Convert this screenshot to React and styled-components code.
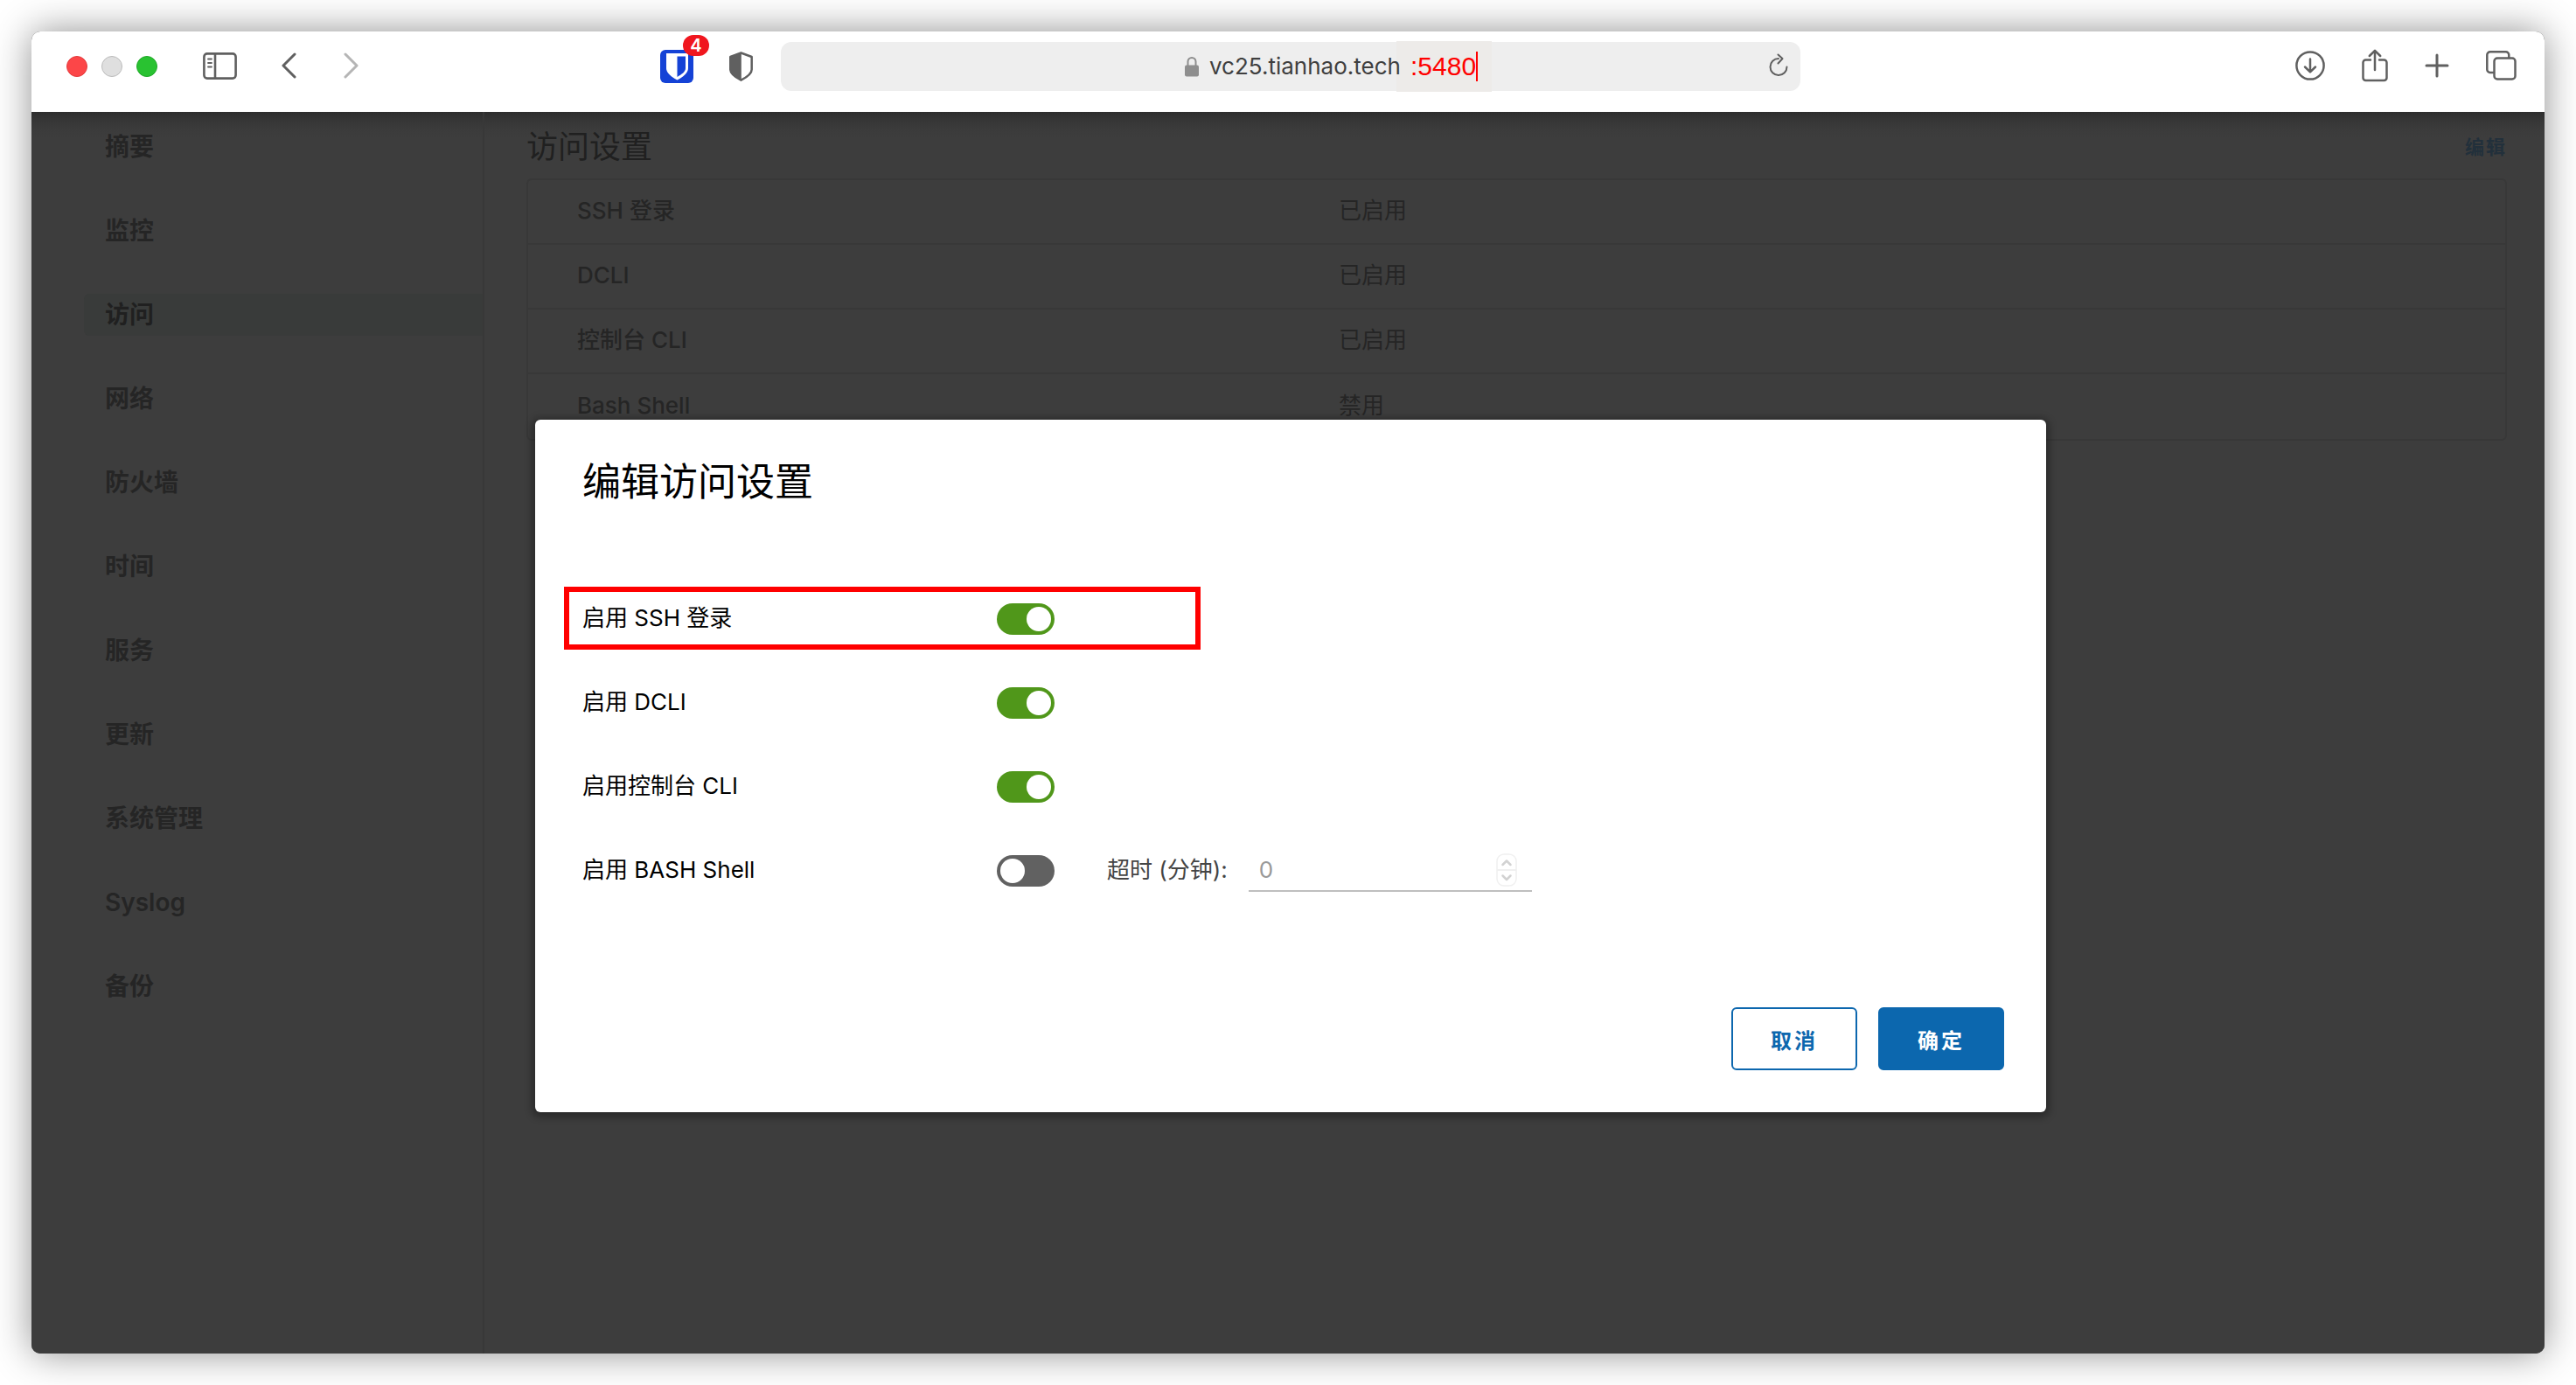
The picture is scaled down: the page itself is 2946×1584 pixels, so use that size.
import React, { useState } from "react";
import styled, { createGlobalStyle, css } from "styled-components";

const sans = `Inter, "Noto Sans CJK SC", "Liberation Sans", sans-serif`;

const color = {
  chrome: "#ffffff",
  chromeIcon: "#606060",
  page: "#3d3d3d",
  line: "#383838",
  text: "#252525",
  heading: "#202020",
  active: "#393b3a",
  link: "#22303b",
  primary: "#0c67ae",
  on: "#50971a",
  off: "#616161",
  mark: "#ff0000",
};

const GlobalStyle = createGlobalStyle`
  *, *::before, *::after { box-sizing: border-box; }
  body { margin: 0; background: #fff; font-family: ${sans}; }
  button, input { font-family: inherit; margin: 0; }
`;

const Desktop = styled.div`
  display: flex;
  min-height: 100vh;
  padding: 36px;
`;

const Window = styled.div`
  flex: 1;
  min-width: 0;
  display: flex;
  flex-direction: column;
  border-radius: 10px;
  overflow: hidden;
  background: ${color.page};
  box-shadow: 0 0 44px rgba(0, 0, 0, 0.44);
`;

/* ---------- Browser chrome ---------- */

const Toolbar = styled.header`
  display: grid;
  grid-template-columns: minmax(0, 857fr) minmax(0, 1166fr) minmax(0, 851fr);
  align-items: center;
  height: 92px;
  padding-bottom: 12px;
  background: ${color.chrome};
`;

const ToolbarSide = styled.div`
  display: flex;
  align-items: center;
  justify-content: ${(p) => (p.$end ? "flex-end" : "flex-start")};
  gap: ${(p) => p.$gap || 0}px;
  padding: ${(p) => (p.$end ? "0 32px 2px 0" : "0 32px 0 40px")};
`;

const Lights = styled.div`
  display: flex;
  gap: 16px;
  margin-right: 52px;
`;

const Light = styled.button`
  width: 24px;
  height: 24px;
  padding: 0;
  border-radius: 50%;
  border: 1px solid ${(p) => p.$edge};
  background: ${(p) => p.$fill};
`;

const IconButton = styled.button`
  display: flex;
  flex: none;
  padding: 0;
  border: 0;
  background: none;
  color: ${(p) => (p.$muted ? "#b5b5b5" : color.chromeIcon)};
  svg { display: block; }
`;

const NavButtons = styled.div`
  display: flex;
  gap: 54px;
  margin-left: 51px;
`;

const Extensions = styled.div`
  display: flex;
  align-items: center;
  gap: 41px;
  margin-left: auto;
`;

const BadgeHost = styled.span`
  position: relative;
  display: block;
`;

const Badge = styled.span`
  position: absolute;
  top: -17px;
  left: 26px;
  width: 30px;
  height: 24px;
  border-radius: 12px;
  background: #f0161e;
  color: #fff;
  font-size: 20px;
  font-weight: 600;
  line-height: 24px;
  text-align: center;
`;

const AddressBar = styled.div`
  display: grid;
  grid-template-columns: 1fr auto 1fr;
  align-items: center;
  height: 56px;
  padding: 0 14px;
  border-radius: 12px;
  background: #eeeeee;
`;

const Address = styled.label`
  position: relative;
  grid-column: 2;
  display: flex;
  align-items: center;
  gap: 12px;
  padding-left: 6px;
`;

const UrlInput = styled.input`
  position: relative;
  z-index: 1;
  width: 220px;
  height: 40px;
  padding: 0 0 2px;
  border: 0;
  outline: 0;
  background: none;
  color: #3f3f3f;
  font-size: 26px;
`;

const Port = styled.span`
  position: absolute;
  top: -9px;
  left: calc(100% - 6px);
  display: flex;
  align-items: center;
  height: 58px;
  padding: 0 16px;
  background: #edebe9;
  color: ${color.mark};
  font-family: "Liberation Sans", sans-serif;
  font-size: 30px;
  line-height: 56px;
  white-space: nowrap;
  &::after {
    content: "";
    width: 2px;
    height: 34px;
    background: ${color.mark};
  }
`;

const ReloadSlot = styled.div`
  justify-self: end;
`;

/* ---------- Page ---------- */

const Page = styled.div`
  position: relative;
  flex: 1;
  display: grid;
  grid-template-columns: 518px minmax(0, 1fr);
  background: linear-gradient(#2d2d2d, #363636 10px, #3b3b3b 20px, ${color.page} 30px);
`;

const Sidebar = styled.nav`
  display: flex;
  flex-direction: column;
  gap: 48px;
  padding: 16px 0 0 60px;
  border-right: 2px solid ${color.line};
`;

const NavLink = styled.a`
  padding-left: 24px;
  border-radius: 6px 0 0 6px;
  color: ${color.text};
  font-size: 28px;
  font-weight: 600;
  line-height: 48px;
  text-decoration: none;
  ${(p) => p.$active && css`
    background: ${color.active};
    color: ${color.heading};
  `}
`;

const Main = styled.main`
  padding: 12px 43px 0 48px;
`;

const SectionHeader = styled.div`
  display: flex;
  align-items: center;
  justify-content: space-between;
  height: 56px;
  margin-bottom: 8px;
`;

const SectionTitle = styled.h1`
  margin: 0;
  color: ${color.heading};
  font-size: 36px;
  font-weight: 400;
  line-height: 56px;
`;

const EditButton = styled.button`
  padding: 0;
  border: 0;
  background: none;
  color: ${color.link};
  font-size: 22px;
  font-weight: 700;
  letter-spacing: 2px;
  line-height: 48px;
`;

const SettingsTable = styled.table`
  width: 100%;
  border: 2px solid ${color.line};
  border-radius: 6px;
  border-spacing: 0;
  color: ${color.text};
  font-size: 26px;
  line-height: 36px;
  text-align: left;
  table-layout: fixed;
  th, td {
    height: 74px;
    padding: 0 0 2px;
    border-bottom: 2px solid ${color.line};
  }
  tr:last-child th, tr:last-child td { border-bottom: 0; }
  th {
    width: 41%;
    padding-left: 56px;
    font-weight: 500;
  }
`;

/* ---------- Dialog ---------- */

const Backdrop = styled.div`
  position: absolute;
  inset: 0;
  display: flex;
  align-items: center;
  justify-content: center;
  padding: 76px 0 0 6px;
`;

const Dialog = styled.form`
  width: 1728px;
  max-width: 100%;
  padding: 40px 48px 48px 54px;
  border-radius: 6px;
  background: #fff;
  color: #000;
  box-shadow: 0 2px 8px 4px rgba(0, 0, 0, 0.3);
  font-size: 26px;
`;

const DialogTitle = styled.h2`
  margin: 0 0 90px;
  font-size: 44px;
  font-weight: 400;
  line-height: 62px;
`;

const Rows = styled.div`
  display: flex;
  flex-direction: column;
  gap: 24px;
`;

const Row = styled.div`
  position: relative;
  display: flex;
  align-items: center;
  height: 72px;
  ${(p) => p.$marked && css`
    &::after {
      content: "";
      position: absolute;
      top: -1px;
      bottom: 1px;
      left: -21px;
      width: 728px;
      border: 6px solid ${color.mark};
      pointer-events: none;
    }
  `}
`;

const RowLabel = styled.label`
  width: 474px;
  padding-bottom: 2px;
  line-height: 36px;
`;

const Switch = styled.input`
  appearance: none;
  flex: none;
  display: flex;
  justify-content: ${(p) => (p.checked ? "flex-end" : "flex-start")};
  width: 66px;
  height: 36px;
  padding: 4px;
  border-radius: 18px;
  background: ${(p) => (p.checked ? color.on : color.off)};
  &::before {
    content: "";
    width: 28px;
    height: 28px;
    border-radius: 50%;
    background: #fff;
  }
`;

const TimeoutLabel = styled.label`
  margin: 0 24px 0 60px;
  padding-bottom: 2px;
  color: #454545;
  line-height: 36px;
`;

const NumberField = styled.div`
  display: flex;
  align-items: center;
  width: 324px;
  height: 48px;
  padding: 0 17px 0 12px;
  border-bottom: 2px solid #bfbfbf;
`;

const NumberInput = styled.input`
  flex: 1;
  min-width: 0;
  height: 46px;
  padding: 0 0 2px;
  border: 0;
  background: none;
  color: #999;
  font-size: 26px;
  appearance: textfield;
  &::-webkit-inner-spin-button { appearance: none; }
`;

const Actions = styled.div`
  display: flex;
  justify-content: flex-end;
  gap: 24px;
  margin-top: 120px;
`;

const ActionButton = styled.button`
  width: 144px;
  height: 72px;
  padding: 0;
  border: 2px solid ${color.primary};
  border-radius: 6px;
  background: ${(p) => (p.$primary ? color.primary : "#fff")};
  color: ${(p) => (p.$primary ? "#fff" : color.primary)};
  font-size: 24px;
  font-weight: 700;
  letter-spacing: 3px;
`;

/* ---------- Icons ---------- */

const Icon = ({ w, h, sw = 3, children }) => (
  <svg width={w} height={h} viewBox={`0 0 ${w} ${h}`} fill="none" stroke="currentColor"
    strokeWidth={sw} strokeLinecap="round" strokeLinejoin="round" aria-hidden="true">
    {children}
  </svg>
);

const SidebarIcon = () => (
  <Icon w={39} h={32} sw={2.6}>
    <rect x="1.4" y="1.4" width="36.2" height="28.2" rx="3.5" />
    <path d="M14 1.5v28" />
    <path d="M6 7.5h4M6 12h4M6 16.5h4" strokeWidth="1.8" />
  </Icon>
);
const BackIcon = () => <Icon w={17} h={32}><path d="M15 2 2 15l13 13" /></Icon>;
const ForwardIcon = () => <Icon w={17} h={32}><path d="m2 2 13 13L2 28" /></Icon>;

const VaultIcon = () => (
  <svg width="38" height="38" viewBox="0 0 38 38" aria-hidden="true">
    <rect width="38" height="38" rx="6" fill="#1542d6" />
    <path d="M7 4h25v17c0 5.5-6 10-12.5 13.5C13 31 7 26.5 7 21z" fill="#fff" />
    <path d="M19.5 7.5H29V21c0 4-4.5 7-9.5 10z" fill="#1542d6" />
  </svg>
);
const ShieldIcon = () => (
  <svg width="27" height="34" viewBox="0 0 27 34" aria-hidden="true">
    <path d="M13.5 1.5 25.7 6v14.5c0 4.5-6 9-12.2 12.2C7.3 29.5 1.3 25 1.3 20.5V6z"
      fill="none" stroke="currentColor" strokeWidth="2.5" strokeLinejoin="round" />
    <path d="M13.8 1v32C7 29.5.5 25 .5 20.5V6z" fill="currentColor" />
  </svg>
);
const LockIcon = () => (
  <svg width="16" height="24" viewBox="0 0 16 24" aria-hidden="true">
    <path d="M3.5 11V6.5a4.5 4.5 0 0 1 9 0V11" fill="none" stroke="#8e8e8e" strokeWidth="2" />
    <rect y="10.5" width="16" height="13" rx="2" fill="#8e8e8e" />
  </svg>
);
const ReloadIcon = () => (
  <Icon w={22} h={30} sw={2}>
    <path d="M11 6a9.5 9.5 0 1 0 9.5 9.5" />
    <path d="m10.5 1.5 5 4.5-5 5.5" />
  </Icon>
);
const DownloadIcon = () => (
  <Icon w={34} h={34} sw={2.5}>
    <circle cx="17" cy="17" r="15.6" />
    <path d="M17 9.5v14.5M11 18.5l6 5.8 6-5.8" />
  </Icon>
);
const ShareIcon = () => (
  <Icon w={30} h={40} sw={2.5}>
    <path d="M10 13.5H4.5a3 3 0 0 0-3 3V34a3 3 0 0 0 3 3h21a3 3 0 0 0 3-3V16.5a3 3 0 0 0-3-3H20" />
    <path d="M15 25V3M8.8 9 15 2.8 21.2 9" />
  </Icon>
);
const PlusIcon = () => <Icon w={28} h={28}><path d="M14 2v24M2 14h24" /></Icon>;
const TabsIcon = () => (
  <Icon w={35} h={34} sw={2.5}>
    <rect x="9.5" y="8.5" width="24" height="24" rx="3.5" />
    <path d="M9 25H4.8a3.5 3.5 0 0 1-3.5-3.5V4.8a3.5 3.5 0 0 1 3.5-3.5h18a3.5 3.5 0 0 1 3.5 3.5V8" />
  </Icon>
);
const StepperIcon = () => (
  <svg width="24" height="38" viewBox="0 0 24 38" fill="none" aria-hidden="true">
    <rect x="1" y="1" width="22" height="36" rx="8" stroke="#f0f0f0" strokeWidth="1.5" />
    <path d="M1 19h22" stroke="#f0f0f0" strokeWidth="2" />
    <path d="m7.5 13 4.5-4.5 4.5 4.5M7.5 25.5 12 30l4.5-4.5" stroke="#d2d2d2"
      strokeWidth="2.5" strokeLinecap="round" strokeLinejoin="round" />
  </svg>
);

/* ---------- Data ---------- */

const navItems = ["摘要", "监控", "访问", "网络", "防火墙", "时间", "服务", "更新", "系统管理", "Syslog", "备份"];

const settings = [
  ["SSH 登录", "已启用"],
  ["DCLI", "已启用"],
  ["控制台 CLI", "已启用"],
  ["Bash Shell", "禁用"],
];

const options = [
  { id: "ssh", label: "启用 SSH 登录", marked: true },
  { id: "dcli", label: "启用 DCLI" },
  { id: "console", label: "启用控制台 CLI" },
  { id: "bash", label: "启用 BASH Shell" },
];

function BrowserToolbar() {
  return (
    <Toolbar>
      <ToolbarSide>
        <Lights>
          <Light $fill="#fc4648" $edge="#e33b3d" aria-label="关闭" />
          <Light $fill="#dfdfdf" $edge="#bcbcbc" aria-label="最小化" />
          <Light $fill="#29c231" $edge="#1fa827" aria-label="缩放" />
        </Lights>
        <IconButton aria-label="边栏"><SidebarIcon /></IconButton>
        <NavButtons>
          <IconButton aria-label="后退"><BackIcon /></IconButton>
          <IconButton $muted aria-label="前进"><ForwardIcon /></IconButton>
        </NavButtons>
        <Extensions>
          <BadgeHost>
            <IconButton aria-label="密码库"><VaultIcon /></IconButton>
            <Badge>4</Badge>
          </BadgeHost>
          <IconButton aria-label="隐私报告"><ShieldIcon /></IconButton>
        </Extensions>
      </ToolbarSide>
      <AddressBar>
        <Address>
          <LockIcon />
          <UrlInput aria-label="地址" defaultValue="vc25.tianhao.tech" />
          <Port>:5480</Port>
        </Address>
        <ReloadSlot>
          <IconButton aria-label="重新载入"><ReloadIcon /></IconButton>
        </ReloadSlot>
      </AddressBar>
      <ToolbarSide $end $gap={42}>
        <IconButton aria-label="下载"><DownloadIcon /></IconButton>
        <IconButton aria-label="共享"><ShareIcon /></IconButton>
        <IconButton aria-label="新标签页"><PlusIcon /></IconButton>
        <IconButton aria-label="标签页概览"><TabsIcon /></IconButton>
      </ToolbarSide>
    </Toolbar>
  );
}

function AccessDialog() {
  const [enabled, setEnabled] = useState({ ssh: true, dcli: true, console: true, bash: false });
  const toggle = (id) => setEnabled((prev) => ({ ...prev, [id]: !prev[id] }));
  return (
    <Dialog role="dialog" aria-labelledby="dialog-title" onSubmit={(e) => e.preventDefault()}>
      <DialogTitle id="dialog-title">编辑访问设置</DialogTitle>
      <Rows>
        {options.map(({ id, label, marked }) => (
          <Row key={id} $marked={marked}>
            <RowLabel htmlFor={id}>{label}</RowLabel>
            <Switch type="checkbox" role="switch" id={id} checked={enabled[id]} onChange={() => toggle(id)} />
            {id === "bash" && (
              <>
                <TimeoutLabel htmlFor="timeout">超时 (分钟):</TimeoutLabel>
                <NumberField>
                  <NumberInput type="number" id="timeout" defaultValue="0" disabled={!enabled.bash} />
                  <StepperIcon />
                </NumberField>
              </>
            )}
          </Row>
        ))}
      </Rows>
      <Actions>
        <ActionButton type="button">取消</ActionButton>
        <ActionButton type="submit" $primary>确定</ActionButton>
      </Actions>
    </Dialog>
  );
}

export default function App() {
  return (
    <>
      <GlobalStyle />
      <Desktop>
        <Window>
          <BrowserToolbar />
          <Page>
            <Sidebar>
              {navItems.map((item) => (
                <NavLink key={item} href="#" $active={item === "访问"}>{item}</NavLink>
              ))}
            </Sidebar>
            <Main>
              <SectionHeader>
                <SectionTitle>访问设置</SectionTitle>
                <EditButton>编辑</EditButton>
              </SectionHeader>
              <SettingsTable>
                <tbody>
                  {settings.map(([name, value]) => (
                    <tr key={name}>
                      <th scope="row">{name}</th>
                      <td>{value}</td>
                    </tr>
                  ))}
                </tbody>
              </SettingsTable>
            </Main>
            <Backdrop>
              <AccessDialog />
            </Backdrop>
          </Page>
        </Window>
      </Desktop>
    </>
  );
}
